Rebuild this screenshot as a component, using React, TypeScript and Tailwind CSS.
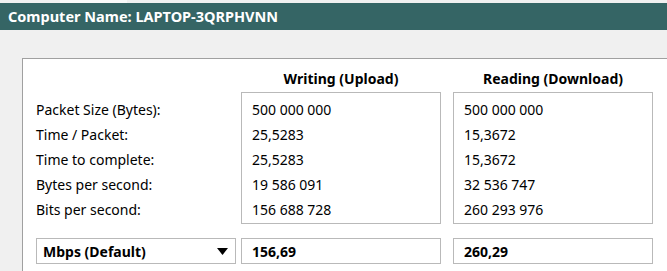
import React from 'react';

const LABELS = [
  'Packet Size (Bytes):',
  'Time / Packet:',
  'Time to complete:',
  'Bytes per second:',
  'Bits per second:',
];

const WRITING = ['500 000 000', '25,5283', '25,5283', '19 586 091', '156 688 728'];
const READING = ['500 000 000', '15,3672', '15,3672', '32 536 747', '260 293 976'];

function ResultColumn({ title, values, total }: { title: string; values: string[]; total: string }) {
  return (
    <div className="flex flex-col w-[200px]">
      <div className="h-[33px] flex items-end justify-center pb-[3px] font-bold text-[14px]">{title}</div>
      <div className="h-[132px] border border-[#b9b9b9] pt-[4px] pl-[10px]">
        {values.map((v, i) => (
          <div key={i} className="h-[25px] flex items-center">
            {v}
          </div>
        ))}
      </div>
      <div className="mt-[14px] h-[26px] border border-[#b9b9b9] pl-[10px] flex items-center font-bold">
        {total}
      </div>
    </div>
  );
}

export default function App() {
  return (
    <div
      className="w-[667px] h-[271px] overflow-hidden bg-[#f0f0f0] flex flex-col text-black text-[14px]"
      style={{ fontFamily: '"Noto Sans", "Open Sans", sans-serif' }}
    >
      {/* tab strip */}
      <div className="h-[3px] flex">
        <div className="w-[60px]" />
        <div className="w-[67px] bg-[#f9f9f9]" />
      </div>

      <div className="h-[27px] bg-[#356565] flex items-center pl-[8px] text-white font-bold text-[14.5px]">
        Computer Name: LAPTOP-3QRPHVNN
      </div>

      <div className="flex-1 pt-[28px] pl-[22px]">
        <div className="h-full bg-white border-l border-t border-[#a0a0a0] flex pl-[13px]">
          <div className="flex flex-col w-[205px]">
            <div className="h-[33px]" />
            <div className="h-[132px] pt-[5px]">
              {LABELS.map((l) => (
                <div key={l} className="h-[25px] flex items-center">
                  {l}
                </div>
              ))}
            </div>
            <div className="mt-[14px] h-[26px] w-[200px] border border-[#b9b9b9] flex items-center justify-between pl-[6px] pr-[7px] font-bold">
              <span>Mbps (Default)</span>
              <svg width="11" height="7" viewBox="0 0 11 7">
                <path d="M0 0 H11 L5.5 7 Z" fill="#000" />
              </svg>
            </div>
          </div>

          <ResultColumn title="Writing (Upload)" values={WRITING} total="156,69" />
          <div className="w-[12px]" />
          <ResultColumn title="Reading (Download)" values={READING} total="260,29" />
        </div>
      </div>
    </div>
  );
}
